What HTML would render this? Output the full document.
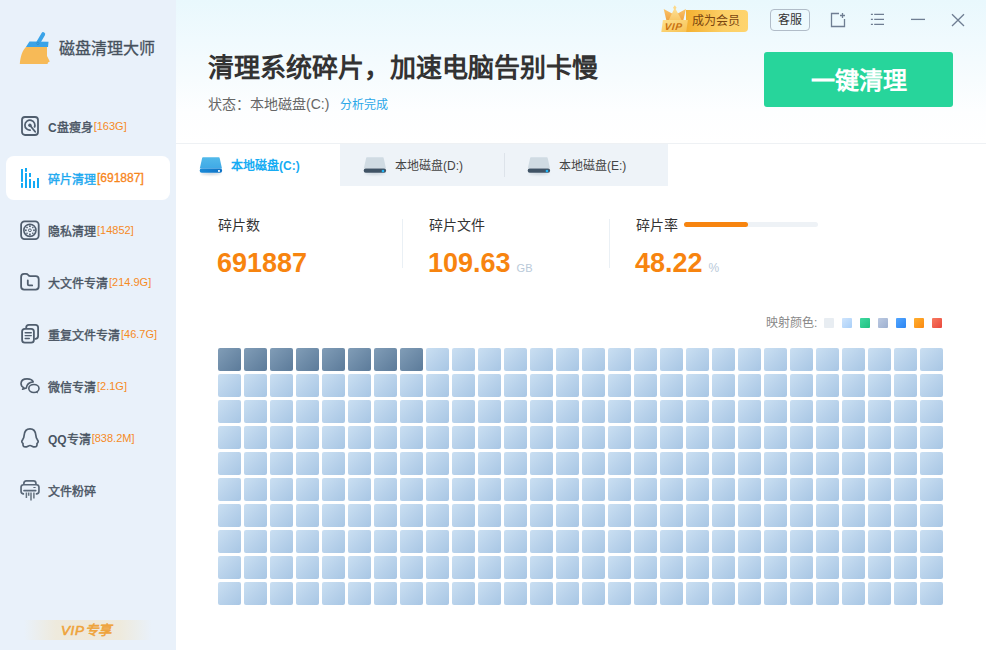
<!DOCTYPE html>
<html lang="zh-CN"><head><meta charset="utf-8">
<style>
*{margin:0;padding:0;box-sizing:border-box}
html,body{width:986px;height:650px;overflow:hidden;background:#fff;font-family:"Liberation Sans",sans-serif}
.abs{position:absolute}
#side{position:absolute;left:0;top:0;width:176px;height:650px;background:#e9f1fa}
#main{position:absolute;left:176px;top:0;width:810px;height:650px;background:#fff}
#hdr{position:absolute;left:0;top:0;width:810px;height:143px;background:linear-gradient(180deg,#e9f8fd 0%,#f0fafe 28%,#f7fcfe 56%,#fdfeff 78%,#fff 100%)}
.item{position:absolute;left:6px;width:164px;height:44px;border-radius:8px}
.item.on{background:#fff}
.item svg{position:absolute;left:14px;top:10px}
.item .t{position:absolute;left:42px;top:2px;line-height:44px;font-size:12px;font-weight:normal;-webkit-text-stroke:0.4px currentColor;color:#4a5563;white-space:nowrap}
.item .t b{font-weight:normal;-webkit-text-stroke:0;color:#f68a1f;font-size:11px;margin-left:1px;position:relative;top:-2px}
.item.on .t{color:#1da9f0}
.item.on .t b{color:#f7851a;font-size:12px;margin-left:1px;-webkit-text-stroke:0.3px currentColor}
#grid i{position:absolute;width:23px;height:23px;border-radius:2px}
#grid i.l{background:linear-gradient(135deg,#cadff2 0%,#a8c6e4 100%)}
#grid i.d{background:linear-gradient(135deg,#819db7 0%,#5c7b9a 100%)}
</style></head><body>
<div id="side">
  <!-- logo -->
  <svg class="abs" style="left:16px;top:30px" width="40" height="38" viewBox="0 0 40 38">
    <path d="M27.2 4.2 L22.2 12.8" stroke="#3aa3e8" stroke-width="4" stroke-linecap="round"/>
    <path d="M13.5 11.5 Q14 11.4 15 11.4 L32.5 11.8 L32 17 L9.9 17 Z" fill="#3aa3e8"/>
    <path d="M9.9 17 L31 17 L31 26 L33.8 31.5 L32 32.5 L31.5 34 L3.8 34 C4.5 26 6.5 20.5 9.9 17 Z" fill="#f7ba57"/>
    <circle cx="21.9" cy="13.4" r="1.2" fill="none" stroke="#2d86c4" stroke-width=".6"/>
  </svg>
  <div class="abs" style="left:59px;top:35px;font-size:16px;font-weight:normal;-webkit-text-stroke:0.3px #46515d;color:#46515d;letter-spacing:0px;white-space:nowrap">磁盘清理大师</div>

  <div class="item" style="top:104px">
    <svg width="22" height="24" viewBox="0 0 22 24"><rect x="2" y="3" width="16" height="18" rx="3" fill="none" stroke="#505e6e" stroke-width="1.8"/><path d="M14.31 13.55 A5.0 5.0 0 1 0 10.77 16.12" fill="none" stroke="#505e6e" stroke-width="1.7"/><circle cx="9.9" cy="11.2" r="1.7" fill="#505e6e"/><path d="M9.9 11.2 L15.2 17.8" stroke="#505e6e" stroke-width="1.8" stroke-linecap="round"/></svg>
    <div class="t"><span style="font-weight:bold;-webkit-text-stroke:0">C</span>盘瘦身<b>[163G]</b></div>
  </div>
  <div class="item on" style="top:156px">
    <svg width="22" height="24" viewBox="0 0 22 24" fill="#13aaf5"><rect x="1" y="3" width="2" height="12.8"/><rect x="1" y="17" width="2" height="4.8"/><rect x="5" y="2" width="2" height="3.8"/><rect x="5" y="7" width="2" height="15"/><rect x="9" y="7" width="2" height="4"/><rect x="9" y="13" width="2" height="9"/><rect x="13" y="15" width="2" height="7"/><rect x="17" y="12" width="2" height="10"/></svg>
    <div class="t">碎片清理<b>[691887]</b></div>
  </div>
  <div class="item" style="top:208px">
    <svg width="22" height="24" viewBox="0 -0.4 22 24"><rect x="1.1" y="2.9" width="17.6" height="17.8" rx="3.5" fill="none" stroke="#505e6e" stroke-width="1.8"/><circle cx="9.9" cy="11.9" r="6.1" fill="none" stroke="#505e6e" stroke-width="1.6"/><circle cx="9.9" cy="11.9" r="1.4" fill="none" stroke="#505e6e" stroke-width="1"/><g fill="#505e6e"><rect x="9.05" y="6.95" width="1.7" height="1.7" transform="rotate(0 9.90 7.80)"/><rect x="12.10" y="8.30" width="1.4" height="1.4" transform="rotate(45 12.80 9.00)"/><rect x="13.15" y="11.05" width="1.7" height="1.7" transform="rotate(90 14.00 11.90)"/><rect x="12.10" y="14.10" width="1.4" height="1.4" transform="rotate(135 12.80 14.80)"/><rect x="9.05" y="15.15" width="1.7" height="1.7" transform="rotate(180 9.90 16.00)"/><rect x="6.30" y="14.10" width="1.4" height="1.4" transform="rotate(225 7.00 14.80)"/><rect x="4.95" y="11.05" width="1.7" height="1.7" transform="rotate(270 5.80 11.90)"/><rect x="6.30" y="8.30" width="1.4" height="1.4" transform="rotate(315 7.00 9.00)"/></g></svg>
    <div class="t">隐私清理<b>[14852]</b></div>
  </div>
  <div class="item" style="top:260px">
    <svg width="22" height="24" viewBox="0 0 22 24"><path d="M1.1 6.9 Q1.1 3.9 4.1 3.9 L6 3.9 Q7.3 3.9 8.2 5 Q9 6.2 10.3 6.2 L15.7 6.2 Q18.7 6.2 18.7 9.2 L18.7 16.6 Q18.7 19.6 15.7 19.6 L4.1 19.6 Q1.1 19.6 1.1 16.6 Z" fill="none" stroke="#505e6e" stroke-width="1.8" stroke-linejoin="round"/><path d="M7.8 10.3 L7.8 14.2 Q7.8 15.4 9 15.4 L12.2 15.4" fill="none" stroke="#505e6e" stroke-width="1.8" stroke-linecap="round"/></svg>
    <div class="t">大文件专清<b>[214.9G]</b></div>
  </div>
  <div class="item" style="top:312px">
    <svg width="22" height="24" viewBox="0 0 22 24"><path d="M6.2 6.9 L6.2 5.6 Q6.2 2.9 8.9 2.9 L15.4 2.9 Q18.1 2.9 18.1 5.6 L18.1 14.1 Q18.1 16.8 15.4 16.8 L14.6 16.8" fill="none" stroke="#505e6e" stroke-width="1.8"/><rect x="2.1" y="6.9" width="11.8" height="13.8" rx="2.7" fill="none" stroke="#505e6e" stroke-width="1.8"/><path d="M5.2 10.7 L11.3 10.7 M5.2 13.6 L11.3 13.6 M5.2 16.5 L9.3 16.5" stroke="#505e6e" stroke-width="1.4" stroke-linecap="round"/></svg>
    <div class="t">重复文件专清<b>[46.7G]</b></div>
  </div>
  <div class="item" style="top:364px">
    <svg width="22" height="24" viewBox="0 0 22 24"><path d="M2.6 15.2 L3.9 13.8 C1.8 12.8 1.0 11.2 1.0 9.6 C1.1 6.6 3.8 4.9 7.1 4.9 C10 4.9 12.5 6.1 13.2 7.9 C9.6 8.3 6.7 10.6 6.3 14.1 Z" fill="none" stroke="#505e6e" stroke-width="1.6" stroke-linejoin="round"/><ellipse cx="13.9" cy="14.5" rx="5.1" ry="3.95" fill="none" stroke="#505e6e" stroke-width="1.6"/><path d="M15.5 18.2 L17.9 19.6 L17.6 17.2 Z" fill="#505e6e"/></svg>
    <div class="t">微信专清<b>[2.1G]</b></div>
  </div>
  <div class="item" style="top:416px">
    <svg width="22" height="24" viewBox="0 0 22 24"><path d="M10 2.9 C13.8 2.9 15.6 5.7 15.9 9.5 C16 11.5 16.5 12.5 17.3 13.6 C18.6 15.2 18.5 16.6 17 17.4 C17.3 19.6 16.6 20.9 14.6 20.9 C12.6 20.9 11.6 19.5 10 19.5 C8.4 19.5 7.4 20.9 5.4 20.9 C3.4 20.9 2.7 19.6 3 17.4 C1.5 16.6 1.4 15.2 2.7 13.6 C3.5 12.5 4 11.5 4.1 9.5 C4.4 5.7 6.2 2.9 10 2.9 Z" fill="none" stroke="#505e6e" stroke-width="1.7" stroke-linejoin="round"/></svg>
    <div class="t"><span style="font-weight:bold;-webkit-text-stroke:0">QQ</span>专清<b>[838.2M]</b></div>
  </div>
  <div class="item" style="top:468px">
    <svg width="22" height="24" viewBox="0 0 22 24"><path d="M3.85 6.75 L3.85 5.4 Q3.85 2.9 6.35 2.9 L13.45 2.9 Q15.95 2.9 15.95 5.4 L15.95 6.75" fill="none" stroke="#5a6878" stroke-width="1.7"/><path d="M4.1 15.85 L3.6 15.85 Q1.05 15.85 1.05 13.3 L1.05 9.3 Q1.05 6.75 3.6 6.75 L16.4 6.75 Q18.95 6.75 18.95 9.3 L18.95 13.3 Q18.95 15.85 16.4 15.85 L15.8 15.85" fill="none" stroke="#5a6878" stroke-width="1.7"/><path d="M4 12.6 L15.7 12.6" stroke="#5a6878" stroke-width="1.7" stroke-linecap="round"/><path d="M13.8 9.5 L15.2 9.5" stroke="#5a6878" stroke-width="1.1" stroke-linecap="round"/><path d="M6.4 14.6 L6.4 20 M8.7 14.6 L8.7 17.8 M11 14.6 L11 22.5 M13.9 14.6 L13.9 20.4" stroke="#66737f" stroke-width="1.5"/></svg>
    <div class="t">文件粉碎</div>
  </div>

  <div class="abs" style="left:24px;top:620px;width:128px;height:20px;background:linear-gradient(90deg,rgba(238,234,222,0) 0%,#eeeadd 25%,#efe8da 50%,#eeeadd 75%,rgba(238,234,222,0) 100%)"></div>
  <div class="abs" style="left:61px;top:622px;font-size:13.5px;line-height:18px;font-style:italic;font-weight:normal;-webkit-text-stroke:0.6px #eea33a;color:#eea33a;white-space:nowrap;letter-spacing:0.6px">VIP专享</div>
</div>


<div id="main">
  <div id="hdr"></div>
  <div class="abs" style="left:0;top:143px;width:810px;height:1px;background:#eef1f4"></div>
  <!-- title -->
  <div class="abs" style="left:32px;top:50px;font-size:26px;font-weight:bold;color:#333;white-space:nowrap;line-height:36px">清理系统碎片，加速电脑告别卡慢</div>
  <div class="abs" style="left:32px;top:94px;font-size:14px;color:#666;white-space:nowrap;line-height:20px">状态：本地磁盘(C:)</div>
  <div class="abs" style="left:164px;top:95px;font-size:12px;color:#2ba7e8;white-space:nowrap;line-height:20px">分析完成</div>

  <!-- vip -->
  <div class="abs" style="left:510px;top:10px;width:62px;height:22px;border-radius:0 4px 4px 0;background:linear-gradient(90deg,#f4b030,#fcd067 60%,#fed46e)"></div>
  <div class="abs" style="left:516px;top:10px;font-size:12px;line-height:22px;color:#7a4510;white-space:nowrap">成为会员</div>
  <svg class="abs" style="left:480px;top:0px" width="36" height="36" viewBox="0 0 36 36">
    <defs>
      <linearGradient id="vs" x1="0" y1="0" x2="0" y2="1"><stop offset="0" stop-color="#fbc46a"/><stop offset="1" stop-color="#f0a443"/></linearGradient>
      <linearGradient id="vc" x1="0" y1="0" x2="0" y2="1"><stop offset="0" stop-color="#fde29a"/><stop offset="1" stop-color="#f9c867"/></linearGradient>
      <linearGradient id="vp" x1="0" y1="0" x2="1" y2="1"><stop offset="0" stop-color="#fde08e"/><stop offset="1" stop-color="#f8c253"/></linearGradient>
    </defs>
    <path d="M7.7 8.9 L16.5 13.8 L14 20 L10.3 20 Z" fill="url(#vs)"/>
    <path d="M29.9 8.9 L21.3 13.8 L23.8 20 L27.4 20 Z" fill="url(#vs)"/>
    <path d="M18.8 7.5 L25.6 20 L12.8 20 Z" fill="url(#vc)"/>
    <path d="M18.8 5.2 L20.6 7.7 L18.8 10 L17 7.7 Z" fill="#fcd98a"/>
    <path d="M6.9 19.9 L31.9 19.9 L30.2 31.9 L5.3 31.9 Z" fill="url(#vp)"/>
    <text x="11.4" y="29.6" font-size="10" font-weight="bold" font-style="italic" fill="#c9700f" font-family="Liberation Sans" letter-spacing="0.6" transform="translate(0 0) skewX(-6)">VIP</text>
  </svg>
  <div class="abs" style="left:594px;top:9px;width:40px;height:22px;border:1px solid #b1bcc8;border-radius:4px;background:transparent;font-size:12px;line-height:21px;text-align:center;color:#333">客服</div>
  <svg class="abs" style="left:650px;top:8px" width="150" height="24" viewBox="0 0 150 24" fill="none" stroke="#6f7e93" stroke-width="1.3">
    <path d="M13 5.5 L5.5 5.5 L5.5 18.5 L18.5 18.5 L18.5 11"/>
    <path d="M16.5 5 L16.5 10 M14 7.5 L19 7.5"/>
    <path d="M44.9 6.3 L46.9 6.3 M44.9 11.4 L46.9 11.4 M44.9 16.4 L46.9 16.4"/>
    <path d="M48.2 6.3 L58 6.3 M48.2 11.4 L58 11.4 M48.2 16.4 L58 16.4"/>
    <path d="M85 11.4 L99 11.4"/>
    <path d="M126 6.3 L138 18 M138 6.3 L126 18"/>
  </svg>

  <!-- green button -->
  <div class="abs" style="left:588px;top:52px;width:189px;height:55px;background:#27d59b;border-radius:3px;color:#fff;font-size:24px;font-weight:bold;text-align:center;line-height:58px">一键清理</div>

  <!-- tabs -->
  <div class="abs" style="left:164px;top:144px;width:328px;height:42px;background:#eef3f8"></div>
  <div class="abs" style="left:328px;top:153px;width:1px;height:24px;background:#dde3ea"></div>
  <svg class="abs" style="left:20px;top:152px" width="30" height="28" viewBox="0 0 30 28">
    <defs><linearGradient id="gb" x1="0" y1="0" x2="0" y2="1"><stop offset="0" stop-color="#52b9ea"/><stop offset="1" stop-color="#3fa9e6"/></linearGradient>
    <linearGradient id="gb2" x1="0" y1="0" x2="1" y2="0"><stop offset="0" stop-color="#1a8ad8"/><stop offset="1" stop-color="#0d72c6"/></linearGradient>
    <filter id="bl" x="-20%" y="-50%" width="140%" height="200%"><feGaussianBlur stdDeviation="0.9"/></filter></defs>
    <ellipse cx="14.9" cy="21.6" rx="10.5" ry="1.3" fill="#9fb0bd" opacity=".55" filter="url(#bl)"/>
    <path d="M7 5.2 L22.8 5.2 Q23.4 5.2 23.6 5.8 L26 16.6 L3.8 16.6 L6.2 5.8 Q6.4 5.2 7 5.2 Z" fill="url(#gb)"/>
    <rect x="3.7" y="16.6" width="22.4" height="4.1" rx="2" fill="url(#gb2)"/>
    <rect x="22" y="18" width="1.9" height="1.9" fill="#e6f4fc"/>
  </svg>
  <div class="abs" style="left:55px;top:155px;font-size:12px;font-weight:bold;color:#17acf3;white-space:nowrap;line-height:22px">本地磁盘(C:)</div>
  <svg class="abs" style="left:184px;top:152px" width="30" height="28" viewBox="0 0 30 28">
    <ellipse cx="14.9" cy="21.6" rx="10.5" ry="1.3" fill="#aab8c3" opacity=".5" filter="url(#bl)"/>
    <path d="M7 5.2 L22.8 5.2 Q23.4 5.2 23.6 5.8 L26 16.6 L3.8 16.6 L6.2 5.8 Q6.4 5.2 7 5.2 Z" fill="#d0dbe3"/>
    <rect x="3.7" y="16.6" width="22.4" height="4.1" rx="2" fill="#405365"/>
    <rect x="21.8" y="17.9" width="2.3" height="2.3" fill="#22b5f7"/>
  </svg>
  <div class="abs" style="left:219px;top:155px;font-size:12px;color:#444;white-space:nowrap;line-height:22px">本地磁盘(D:)</div>
  <svg class="abs" style="left:348px;top:152px" width="30" height="28" viewBox="0 0 30 28">
    <ellipse cx="14.9" cy="21.6" rx="10.5" ry="1.3" fill="#aab8c3" opacity=".5" filter="url(#bl)"/>
    <path d="M7 5.2 L22.8 5.2 Q23.4 5.2 23.6 5.8 L26 16.6 L3.8 16.6 L6.2 5.8 Q6.4 5.2 7 5.2 Z" fill="#d0dbe3"/>
    <rect x="3.7" y="16.6" width="22.4" height="4.1" rx="2" fill="#405365"/>
    <rect x="21.8" y="17.9" width="2.3" height="2.3" fill="#22b5f7"/>
  </svg>
  <div class="abs" style="left:383px;top:155px;font-size:12px;color:#444;white-space:nowrap;line-height:22px">本地磁盘(E:)</div>

  <!-- stats -->
  <div class="abs" style="left:42px;top:215px;font-size:14px;color:#333;white-space:nowrap;line-height:20px">碎片数</div>
  <div class="abs" style="left:41px;top:247px;font-size:27px;font-weight:bold;color:#f7840f;white-space:nowrap;line-height:32px">691887</div>
  <div class="abs" style="left:226px;top:219px;width:1px;height:49px;background:#eaf0f5"></div>
  <div class="abs" style="left:253px;top:215px;font-size:14px;color:#333;white-space:nowrap;line-height:20px">碎片文件</div>
  <div class="abs" style="left:252px;top:247px;font-size:27px;font-weight:bold;color:#f7840f;white-space:nowrap;line-height:32px">109.63<span style="font-size:11px;font-weight:normal;color:#b9c9d9;margin-left:6px">GB</span></div>
  <div class="abs" style="left:433px;top:219px;width:1px;height:49px;background:#eaf0f5"></div>
  <div class="abs" style="left:460px;top:215px;font-size:14px;color:#333;white-space:nowrap;line-height:20px">碎片率</div>
  <div class="abs" style="left:508px;top:222px;width:134px;height:5px;border-radius:3px;background:#eef2f6"></div>
  <div class="abs" style="left:508px;top:222px;width:64px;height:5px;border-radius:3px;background:#f7840f"></div>
  <div class="abs" style="left:459px;top:247px;font-size:27px;font-weight:bold;color:#f7840f;white-space:nowrap;line-height:32px">48.22<span style="font-size:12px;font-weight:normal;color:#b9c9d9;margin-left:6px">%</span></div>

  <!-- legend -->
  <div class="abs" style="left:590px;top:313px;font-size:12px;color:#888;white-space:nowrap;line-height:20px">映射颜色:</div>
  <div class="abs" style="left:648px;top:318px;width:10px;height:10px;border-radius:1px;background:#e8edf2"></div>
  <div class="abs" style="left:666px;top:318px;width:10px;height:10px;border-radius:1px;background:linear-gradient(135deg,#cfe5fd,#a9cff8)"></div>
  <div class="abs" style="left:684px;top:318px;width:10px;height:10px;border-radius:1px;background:linear-gradient(135deg,#3fd9a0,#20c081)"></div>
  <div class="abs" style="left:702px;top:318px;width:10px;height:10px;border-radius:1px;background:linear-gradient(135deg,#bccae2,#9eb0d0)"></div>
  <div class="abs" style="left:720px;top:318px;width:10px;height:10px;border-radius:1px;background:linear-gradient(135deg,#53a6ff,#2b85f2)"></div>
  <div class="abs" style="left:738px;top:318px;width:10px;height:10px;border-radius:1px;background:linear-gradient(135deg,#ffae2e,#fb8a12)"></div>
  <div class="abs" style="left:756px;top:318px;width:10px;height:10px;border-radius:1px;background:linear-gradient(135deg,#f87a60,#e9473c)"></div>

  <div id="grid" class="abs" style="left:42px;top:348px;width:725px;height:257px"><i class="d" style="left:0px;top:0px"></i><i class="d" style="left:26px;top:0px"></i><i class="d" style="left:52px;top:0px"></i><i class="d" style="left:78px;top:0px"></i><i class="d" style="left:104px;top:0px"></i><i class="d" style="left:130px;top:0px"></i><i class="d" style="left:156px;top:0px"></i><i class="d" style="left:182px;top:0px"></i><i class="l" style="left:208px;top:0px"></i><i class="l" style="left:234px;top:0px"></i><i class="l" style="left:260px;top:0px"></i><i class="l" style="left:286px;top:0px"></i><i class="l" style="left:312px;top:0px"></i><i class="l" style="left:338px;top:0px"></i><i class="l" style="left:364px;top:0px"></i><i class="l" style="left:390px;top:0px"></i><i class="l" style="left:416px;top:0px"></i><i class="l" style="left:442px;top:0px"></i><i class="l" style="left:468px;top:0px"></i><i class="l" style="left:494px;top:0px"></i><i class="l" style="left:520px;top:0px"></i><i class="l" style="left:546px;top:0px"></i><i class="l" style="left:572px;top:0px"></i><i class="l" style="left:598px;top:0px"></i><i class="l" style="left:624px;top:0px"></i><i class="l" style="left:650px;top:0px"></i><i class="l" style="left:676px;top:0px"></i><i class="l" style="left:702px;top:0px"></i><i class="l" style="left:0px;top:26px"></i><i class="l" style="left:26px;top:26px"></i><i class="l" style="left:52px;top:26px"></i><i class="l" style="left:78px;top:26px"></i><i class="l" style="left:104px;top:26px"></i><i class="l" style="left:130px;top:26px"></i><i class="l" style="left:156px;top:26px"></i><i class="l" style="left:182px;top:26px"></i><i class="l" style="left:208px;top:26px"></i><i class="l" style="left:234px;top:26px"></i><i class="l" style="left:260px;top:26px"></i><i class="l" style="left:286px;top:26px"></i><i class="l" style="left:312px;top:26px"></i><i class="l" style="left:338px;top:26px"></i><i class="l" style="left:364px;top:26px"></i><i class="l" style="left:390px;top:26px"></i><i class="l" style="left:416px;top:26px"></i><i class="l" style="left:442px;top:26px"></i><i class="l" style="left:468px;top:26px"></i><i class="l" style="left:494px;top:26px"></i><i class="l" style="left:520px;top:26px"></i><i class="l" style="left:546px;top:26px"></i><i class="l" style="left:572px;top:26px"></i><i class="l" style="left:598px;top:26px"></i><i class="l" style="left:624px;top:26px"></i><i class="l" style="left:650px;top:26px"></i><i class="l" style="left:676px;top:26px"></i><i class="l" style="left:702px;top:26px"></i><i class="l" style="left:0px;top:52px"></i><i class="l" style="left:26px;top:52px"></i><i class="l" style="left:52px;top:52px"></i><i class="l" style="left:78px;top:52px"></i><i class="l" style="left:104px;top:52px"></i><i class="l" style="left:130px;top:52px"></i><i class="l" style="left:156px;top:52px"></i><i class="l" style="left:182px;top:52px"></i><i class="l" style="left:208px;top:52px"></i><i class="l" style="left:234px;top:52px"></i><i class="l" style="left:260px;top:52px"></i><i class="l" style="left:286px;top:52px"></i><i class="l" style="left:312px;top:52px"></i><i class="l" style="left:338px;top:52px"></i><i class="l" style="left:364px;top:52px"></i><i class="l" style="left:390px;top:52px"></i><i class="l" style="left:416px;top:52px"></i><i class="l" style="left:442px;top:52px"></i><i class="l" style="left:468px;top:52px"></i><i class="l" style="left:494px;top:52px"></i><i class="l" style="left:520px;top:52px"></i><i class="l" style="left:546px;top:52px"></i><i class="l" style="left:572px;top:52px"></i><i class="l" style="left:598px;top:52px"></i><i class="l" style="left:624px;top:52px"></i><i class="l" style="left:650px;top:52px"></i><i class="l" style="left:676px;top:52px"></i><i class="l" style="left:702px;top:52px"></i><i class="l" style="left:0px;top:78px"></i><i class="l" style="left:26px;top:78px"></i><i class="l" style="left:52px;top:78px"></i><i class="l" style="left:78px;top:78px"></i><i class="l" style="left:104px;top:78px"></i><i class="l" style="left:130px;top:78px"></i><i class="l" style="left:156px;top:78px"></i><i class="l" style="left:182px;top:78px"></i><i class="l" style="left:208px;top:78px"></i><i class="l" style="left:234px;top:78px"></i><i class="l" style="left:260px;top:78px"></i><i class="l" style="left:286px;top:78px"></i><i class="l" style="left:312px;top:78px"></i><i class="l" style="left:338px;top:78px"></i><i class="l" style="left:364px;top:78px"></i><i class="l" style="left:390px;top:78px"></i><i class="l" style="left:416px;top:78px"></i><i class="l" style="left:442px;top:78px"></i><i class="l" style="left:468px;top:78px"></i><i class="l" style="left:494px;top:78px"></i><i class="l" style="left:520px;top:78px"></i><i class="l" style="left:546px;top:78px"></i><i class="l" style="left:572px;top:78px"></i><i class="l" style="left:598px;top:78px"></i><i class="l" style="left:624px;top:78px"></i><i class="l" style="left:650px;top:78px"></i><i class="l" style="left:676px;top:78px"></i><i class="l" style="left:702px;top:78px"></i><i class="l" style="left:0px;top:104px"></i><i class="l" style="left:26px;top:104px"></i><i class="l" style="left:52px;top:104px"></i><i class="l" style="left:78px;top:104px"></i><i class="l" style="left:104px;top:104px"></i><i class="l" style="left:130px;top:104px"></i><i class="l" style="left:156px;top:104px"></i><i class="l" style="left:182px;top:104px"></i><i class="l" style="left:208px;top:104px"></i><i class="l" style="left:234px;top:104px"></i><i class="l" style="left:260px;top:104px"></i><i class="l" style="left:286px;top:104px"></i><i class="l" style="left:312px;top:104px"></i><i class="l" style="left:338px;top:104px"></i><i class="l" style="left:364px;top:104px"></i><i class="l" style="left:390px;top:104px"></i><i class="l" style="left:416px;top:104px"></i><i class="l" style="left:442px;top:104px"></i><i class="l" style="left:468px;top:104px"></i><i class="l" style="left:494px;top:104px"></i><i class="l" style="left:520px;top:104px"></i><i class="l" style="left:546px;top:104px"></i><i class="l" style="left:572px;top:104px"></i><i class="l" style="left:598px;top:104px"></i><i class="l" style="left:624px;top:104px"></i><i class="l" style="left:650px;top:104px"></i><i class="l" style="left:676px;top:104px"></i><i class="l" style="left:702px;top:104px"></i><i class="l" style="left:0px;top:130px"></i><i class="l" style="left:26px;top:130px"></i><i class="l" style="left:52px;top:130px"></i><i class="l" style="left:78px;top:130px"></i><i class="l" style="left:104px;top:130px"></i><i class="l" style="left:130px;top:130px"></i><i class="l" style="left:156px;top:130px"></i><i class="l" style="left:182px;top:130px"></i><i class="l" style="left:208px;top:130px"></i><i class="l" style="left:234px;top:130px"></i><i class="l" style="left:260px;top:130px"></i><i class="l" style="left:286px;top:130px"></i><i class="l" style="left:312px;top:130px"></i><i class="l" style="left:338px;top:130px"></i><i class="l" style="left:364px;top:130px"></i><i class="l" style="left:390px;top:130px"></i><i class="l" style="left:416px;top:130px"></i><i class="l" style="left:442px;top:130px"></i><i class="l" style="left:468px;top:130px"></i><i class="l" style="left:494px;top:130px"></i><i class="l" style="left:520px;top:130px"></i><i class="l" style="left:546px;top:130px"></i><i class="l" style="left:572px;top:130px"></i><i class="l" style="left:598px;top:130px"></i><i class="l" style="left:624px;top:130px"></i><i class="l" style="left:650px;top:130px"></i><i class="l" style="left:676px;top:130px"></i><i class="l" style="left:702px;top:130px"></i><i class="l" style="left:0px;top:156px"></i><i class="l" style="left:26px;top:156px"></i><i class="l" style="left:52px;top:156px"></i><i class="l" style="left:78px;top:156px"></i><i class="l" style="left:104px;top:156px"></i><i class="l" style="left:130px;top:156px"></i><i class="l" style="left:156px;top:156px"></i><i class="l" style="left:182px;top:156px"></i><i class="l" style="left:208px;top:156px"></i><i class="l" style="left:234px;top:156px"></i><i class="l" style="left:260px;top:156px"></i><i class="l" style="left:286px;top:156px"></i><i class="l" style="left:312px;top:156px"></i><i class="l" style="left:338px;top:156px"></i><i class="l" style="left:364px;top:156px"></i><i class="l" style="left:390px;top:156px"></i><i class="l" style="left:416px;top:156px"></i><i class="l" style="left:442px;top:156px"></i><i class="l" style="left:468px;top:156px"></i><i class="l" style="left:494px;top:156px"></i><i class="l" style="left:520px;top:156px"></i><i class="l" style="left:546px;top:156px"></i><i class="l" style="left:572px;top:156px"></i><i class="l" style="left:598px;top:156px"></i><i class="l" style="left:624px;top:156px"></i><i class="l" style="left:650px;top:156px"></i><i class="l" style="left:676px;top:156px"></i><i class="l" style="left:702px;top:156px"></i><i class="l" style="left:0px;top:182px"></i><i class="l" style="left:26px;top:182px"></i><i class="l" style="left:52px;top:182px"></i><i class="l" style="left:78px;top:182px"></i><i class="l" style="left:104px;top:182px"></i><i class="l" style="left:130px;top:182px"></i><i class="l" style="left:156px;top:182px"></i><i class="l" style="left:182px;top:182px"></i><i class="l" style="left:208px;top:182px"></i><i class="l" style="left:234px;top:182px"></i><i class="l" style="left:260px;top:182px"></i><i class="l" style="left:286px;top:182px"></i><i class="l" style="left:312px;top:182px"></i><i class="l" style="left:338px;top:182px"></i><i class="l" style="left:364px;top:182px"></i><i class="l" style="left:390px;top:182px"></i><i class="l" style="left:416px;top:182px"></i><i class="l" style="left:442px;top:182px"></i><i class="l" style="left:468px;top:182px"></i><i class="l" style="left:494px;top:182px"></i><i class="l" style="left:520px;top:182px"></i><i class="l" style="left:546px;top:182px"></i><i class="l" style="left:572px;top:182px"></i><i class="l" style="left:598px;top:182px"></i><i class="l" style="left:624px;top:182px"></i><i class="l" style="left:650px;top:182px"></i><i class="l" style="left:676px;top:182px"></i><i class="l" style="left:702px;top:182px"></i><i class="l" style="left:0px;top:208px"></i><i class="l" style="left:26px;top:208px"></i><i class="l" style="left:52px;top:208px"></i><i class="l" style="left:78px;top:208px"></i><i class="l" style="left:104px;top:208px"></i><i class="l" style="left:130px;top:208px"></i><i class="l" style="left:156px;top:208px"></i><i class="l" style="left:182px;top:208px"></i><i class="l" style="left:208px;top:208px"></i><i class="l" style="left:234px;top:208px"></i><i class="l" style="left:260px;top:208px"></i><i class="l" style="left:286px;top:208px"></i><i class="l" style="left:312px;top:208px"></i><i class="l" style="left:338px;top:208px"></i><i class="l" style="left:364px;top:208px"></i><i class="l" style="left:390px;top:208px"></i><i class="l" style="left:416px;top:208px"></i><i class="l" style="left:442px;top:208px"></i><i class="l" style="left:468px;top:208px"></i><i class="l" style="left:494px;top:208px"></i><i class="l" style="left:520px;top:208px"></i><i class="l" style="left:546px;top:208px"></i><i class="l" style="left:572px;top:208px"></i><i class="l" style="left:598px;top:208px"></i><i class="l" style="left:624px;top:208px"></i><i class="l" style="left:650px;top:208px"></i><i class="l" style="left:676px;top:208px"></i><i class="l" style="left:702px;top:208px"></i><i class="l" style="left:0px;top:234px"></i><i class="l" style="left:26px;top:234px"></i><i class="l" style="left:52px;top:234px"></i><i class="l" style="left:78px;top:234px"></i><i class="l" style="left:104px;top:234px"></i><i class="l" style="left:130px;top:234px"></i><i class="l" style="left:156px;top:234px"></i><i class="l" style="left:182px;top:234px"></i><i class="l" style="left:208px;top:234px"></i><i class="l" style="left:234px;top:234px"></i><i class="l" style="left:260px;top:234px"></i><i class="l" style="left:286px;top:234px"></i><i class="l" style="left:312px;top:234px"></i><i class="l" style="left:338px;top:234px"></i><i class="l" style="left:364px;top:234px"></i><i class="l" style="left:390px;top:234px"></i><i class="l" style="left:416px;top:234px"></i><i class="l" style="left:442px;top:234px"></i><i class="l" style="left:468px;top:234px"></i><i class="l" style="left:494px;top:234px"></i><i class="l" style="left:520px;top:234px"></i><i class="l" style="left:546px;top:234px"></i><i class="l" style="left:572px;top:234px"></i><i class="l" style="left:598px;top:234px"></i><i class="l" style="left:624px;top:234px"></i><i class="l" style="left:650px;top:234px"></i><i class="l" style="left:676px;top:234px"></i><i class="l" style="left:702px;top:234px"></i></div>
</div>
</body></html>
